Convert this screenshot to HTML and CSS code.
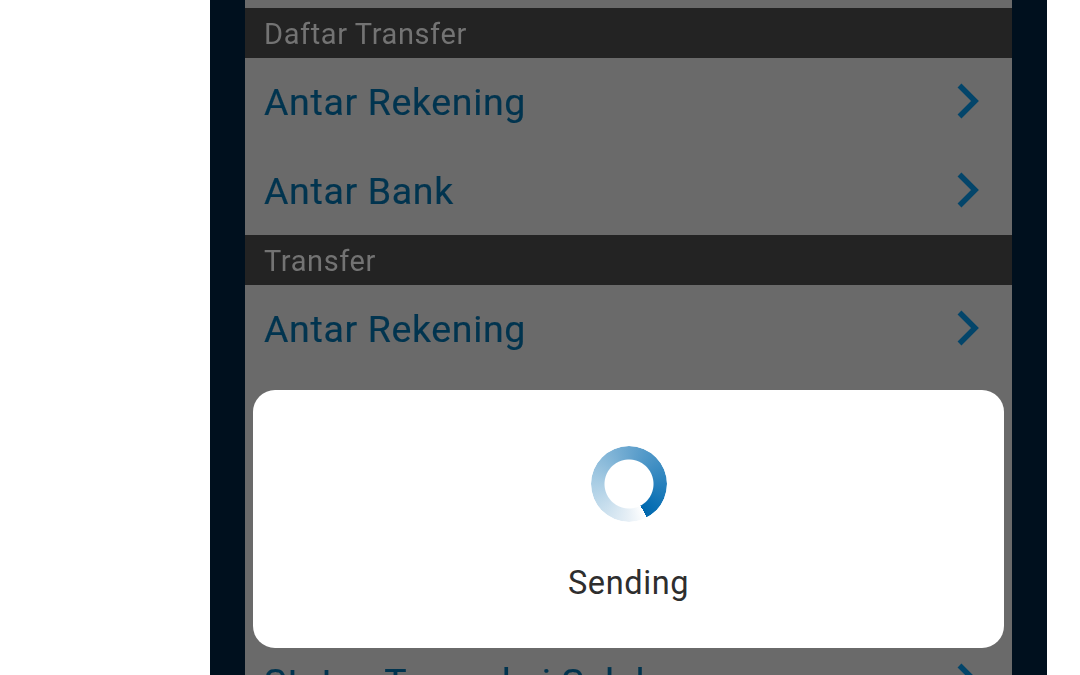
FILE: index.html
```html
<!DOCTYPE html>
<html lang="id">
<head>
<meta charset="utf-8">
<title>Transfer</title>
<link rel="stylesheet" href="styles.css">
</head>
<body>
<div class="frame">
  <div class="screen">
    <div class="section">Daftar Transfer</div>
    <div class="row"><span>Antar Rekening</span><svg class="chev" viewBox="0 0 24 38"><path d="M3.5 3.5 L19 19 L3.5 34.5"/></svg></div>
    <div class="row"><span>Antar Bank</span><svg class="chev" viewBox="0 0 24 38"><path d="M3.5 3.5 L19 19 L3.5 34.5"/></svg></div>
    <div class="section">Transfer</div>
    <div class="row"><span>Antar Rekening</span><svg class="chev" viewBox="0 0 24 38"><path d="M3.5 3.5 L19 19 L3.5 34.5"/></svg></div>
    <div class="row"><span>Antar Bank</span><svg class="chev" viewBox="0 0 24 38"><path d="M3.5 3.5 L19 19 L3.5 34.5"/></svg></div>
    <div class="row"><span>Virtual Account</span><svg class="chev" viewBox="0 0 24 38"><path d="M3.5 3.5 L19 19 L3.5 34.5"/></svg></div>
    <div class="row row-short"><span>E-Wallet</span><svg class="chev" viewBox="0 0 24 38"><path d="M3.5 3.5 L19 19 L3.5 34.5"/></svg></div>
    <div class="row"><span>Status Transaksi Selaku</span><svg class="chev" viewBox="0 0 24 38"><path d="M3.5 3.5 L19 19 L3.5 34.5"/></svg></div>
  </div>
  <div class="dialog">
    <div class="spinner"></div>
    <div class="label">Sending</div>
  </div>
</div>
</body>
</html>
```
FILE: styles.css
```css
html, body { margin: 0; height: 675px; overflow: hidden; background: #fff; }
.frame { position: relative; margin-left: 210px; width: 837px; height: 675px; background: #00101e; overflow: hidden; padding: 0 35px; box-sizing: border-box; }
.screen { background: #6a6a6a; padding-top: 8px; height: 675px; box-sizing: border-box; overflow: hidden; width: 767px; font-family: Roboto, sans-serif; filter: blur(.5px); }
.section { height: 50px; box-sizing: border-box; padding: 0 19px; background: #232323; color: #737373; font-size: 29px; line-height: 52px; letter-spacing: .6px; }
.row { height: 88.5px; display: flex; align-items: center; justify-content: space-between; padding: 0 32px 0 19px; color: #01344f; font-size: 37.5px; letter-spacing: .65px; -webkit-text-stroke: .2px #01344f; }
.row-short { height: 87px; }
.chev { width: 24px; height: 38px; margin-top: -2px; fill: none; stroke: #03456a; stroke-width: 5.5; }
.dialog { position: absolute; left: 43px; top: 390px; width: 751px; height: 258px; background: #fff; border-radius: 22px; display: flex; flex-direction: column; align-items: center; font-family: Roboto, sans-serif; }
.spinner { width: 76px; height: 76px; margin-top: 56px; border-radius: 50%; background: conic-gradient(from 152deg, #ffffff 0deg, #e6eff6 30deg, #a9cde4 120deg, #5fa0cc 220deg, #0a70b4 340deg, #0068ae 360deg); -webkit-mask: radial-gradient(circle, transparent 24px, #000 25px); mask: radial-gradient(circle, transparent 24px, #000 25px); }
.label { margin-top: 41px; font-size: 32.5px; line-height: 40px; letter-spacing: .6px; color: #2e2e2e; }
```
